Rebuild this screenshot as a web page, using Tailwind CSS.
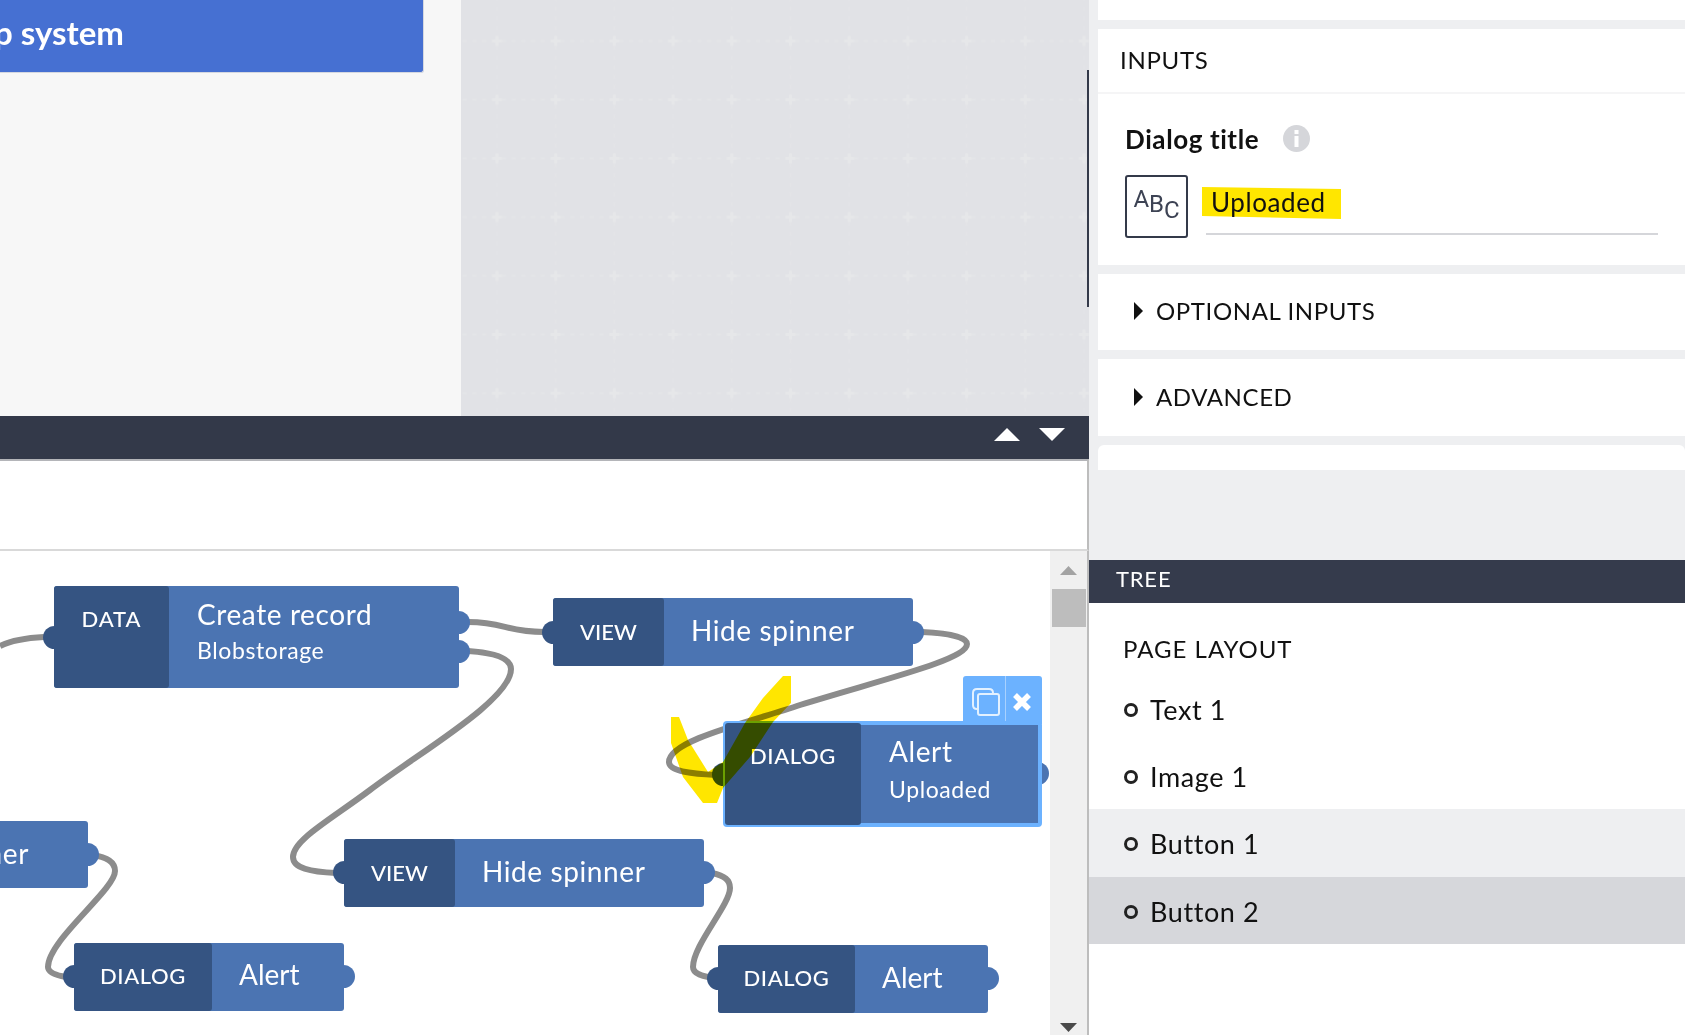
<!DOCTYPE html>
<html lang="en">
<head>
  <meta charset="UTF-8" />
  <meta name="viewport" content="width=device-width, initial-scale=1.0" />
  <title>Flow editor</title>
  <script src="https://cdn.jsdelivr.net/npm/@tailwindcss/browser@4"></script>
</head>
<body class="w-[1685px] h-[1035px] overflow-hidden flex bg-white text-[#111] tracking-[0.6px] font-['Lato','Open_Sans',sans-serif]">

  <!-- left column: preview + flow editor -->
  <div class="w-[1089px] h-full flex flex-col shrink-0">
    <div class="h-[416px] flex">
      <div class="w-[461px] bg-[#f7f7f7]">
        <div class="w-[424px] h-[73px] bg-[#4670d2] rounded-br-[3px] border-b border-r border-[#d5d8e0] overflow-hidden flex items-center justify-end pr-[299px] pb-[6px]">
          <span class="text-white font-bold text-[33px] tracking-normal whitespace-nowrap">Popup system</span>
        </div>
      </div>
      <div class="relative flex-1 bg-[#e1e2e6]">
        <svg class="absolute inset-0 w-full h-full" xmlns="http://www.w3.org/2000/svg">
          <defs>
            <pattern id="grid" x="6.650" y="11.650" width="58.7" height="58.7" patternUnits="userSpaceOnUse">
              <path d="M0 29.350H58.7" stroke="#e4e5e8" stroke-width="2" stroke-dasharray="4 5.780" stroke-dashoffset="-4.800" />
              <path d="M29.350 0V58.7" stroke="#e3e4e7" stroke-width="1.500" stroke-dasharray="4 5.780" stroke-dashoffset="-4.800" />
              <path d="M24.350 29.350H34.350M29.350 24.350V34.350" stroke="#e6e7e9" stroke-width="3" />
            </pattern>
          </defs>
          <rect width="100%" height="100%" fill="url(#grid)" />
        </svg>
        <div class="absolute right-0 top-[70px] w-[2px] h-[237px] bg-[#343a4a]"></div>
      </div>
    </div>

    <div class="h-[43px] bg-[#333949] flex items-center justify-end gap-[19px] pr-[24px] pb-[6px]">
      <svg width="26" height="13" viewBox="0 0 26 13"><path d="M0 13L13 0L26 13Z" fill="#fff" /></svg>
      <svg width="26" height="13" viewBox="0 0 26 13"><path d="M0 0H26L13 13Z" fill="#fff" /></svg>
    </div>
    <div class="h-[92px] bg-white border-t-[2px] border-b-[2px] border-t-[#b4b5b9] border-b-[#d9d9d9] border-r-[2px] border-r-[#bdbdbd]"></div>

    <div class="relative flex-1 flex border-r-[2px] border-[#bdbdbd]">
      <div class="relative flex-1 overflow-hidden">
        <svg class="absolute inset-0" width="1050" height="484" viewBox="0 551 1050 484" fill="none" stroke="#8c8c8c" stroke-width="6">
          <path d="M0 646C12 640 25 638 44 637" />
          <path d="M468 622C505 622 505 632 544 632" />
          <path d="M468 651C498 653 511 659 511 669C511 700 420 752 370 790C330 820 293 840 293 857C293 868 310 872 336 873" />
          <path d="M92 855C108 857 115 863 115 871C115 890 48 940 48 967C48 972 54 975 66 977" />
          <path d="M712 873C725 876 730 880 730 888C730 905 693 945 693 967C693 973 700 977 722 979" />
          <path d="M922 632C948 633 967 637 967 644C967 660 880 680 800 705C750 722 669 740 669 762C669 772 695 774 716 775" />
        </svg>

        <!-- partly hidden node on the left edge -->
        <div class="absolute left-[-200px] top-[270px] w-[288px] h-[67px]">
          <div class="absolute right-[-11px] top-[22px] w-[23px] h-[23px] rounded-full bg-[#4b74b2]"></div>
          <div class="relative h-full bg-[#4b74b2] rounded-[3px] flex items-center justify-end pr-[59px] pb-[4px] text-white text-[28px]">Hide spinner</div>
        </div>

        <!-- Create record -->
        <div class="absolute left-[54px] top-[35px] w-[405px] h-[102px]">
          <div class="absolute left-[-11px] top-[40px] w-[23px] h-[23px] rounded-full bg-[#355482]"></div>
          <div class="absolute right-[-11px] top-[25px] w-[23px] h-[23px] rounded-full bg-[#4b74b2]"></div>
          <div class="absolute right-[-11px] top-[54px] w-[23px] h-[23px] rounded-full bg-[#4b74b2]"></div>
          <div class="relative h-full flex rounded-[3px] overflow-hidden bg-[#4b74b2] text-white">
            <div class="w-[115px] bg-[#355482] rounded-r-[3px] text-center pt-[15px] text-[22px] tracking-[1px] font-medium leading-[36px]">DATA</div>
            <div class="pl-[28px] pt-[8px]">
              <div class="text-[28px] leading-[40px]">Create record</div>
              <div class="text-[23px] leading-[32px]">Blobstorage</div>
            </div>
          </div>
        </div>

        <!-- Hide spinner, top -->
        <div class="absolute left-[553px] top-[47px] w-[360px] h-[68px]">
          <div class="absolute left-[-11px] top-[23px] w-[23px] h-[23px] rounded-full bg-[#355482]"></div>
          <div class="absolute right-[-11px] top-[23px] w-[23px] h-[23px] rounded-full bg-[#4b74b2]"></div>
          <div class="relative h-full flex items-center rounded-[3px] overflow-hidden bg-[#4b74b2] text-white">
            <div class="w-[111px] h-full flex items-center justify-center bg-[#355482] rounded-r-[3px] pb-[2px] text-[22px] tracking-normal font-medium">VIEW</div>
            <div class="pl-[27px] pb-[5px] text-[28px]">Hide spinner</div>
          </div>
        </div>

        <!-- selected dialog -->
        <div class="absolute left-[963px] top-[125px] w-[79px] h-[48px] bg-[#6cb2ff] rounded-t-[3px] flex">
          <div class="w-[43px] border-r border-[#a8d1ff] flex items-center justify-center pl-[3px] pt-[3px]">
            <svg width="30" height="30" viewBox="0 0 30 30" fill="none" stroke="#e3f1ff" stroke-width="2">
              <path d="M6 22C3.500 22 2 20.500 2 18V6C2 3.500 3.500 2 6 2H18C20.500 2 22 3.500 22 6" />
              <rect x="7" y="7" width="21" height="21" rx="2" />
            </svg>
          </div>
          <div class="flex-1 flex items-center justify-center pr-[4px] pt-[3px]">
            <svg width="20" height="20" viewBox="0 0 20 20"><path d="M3 3L17 17M17 3L3 17" stroke="#fff" stroke-width="5.500" /></svg>
          </div>
        </div>
        <div class="absolute left-[723px] top-[170px] w-[319px] h-[106px]">
          <div class="absolute left-[-11px] top-[42px] w-[23px] h-[23px] rounded-full bg-[#355482]"></div>
          <div class="absolute right-[-7px] top-[41px] w-[23px] h-[23px] rounded-full bg-[#4b74b2]"></div>
          <div class="relative h-full flex rounded-[4px] border-[4px] border-[#6cb2ff] bg-[#4b74b2] text-white">
            <div class="w-[136px] -my-[2px] -ml-[2px] bg-[#355482] rounded-[3px] text-center pt-[15px] text-[22px] font-medium leading-[36px]">DIALOG</div>
            <div class="pl-[28px] pt-[6px]">
              <div class="text-[28px] leading-[40px]">Alert</div>
              <div class="text-[23px] leading-[36px]">Uploaded</div>
            </div>
          </div>
        </div>

        <!-- Hide spinner, lower -->
        <div class="absolute left-[344px] top-[288px] w-[360px] h-[68px]">
          <div class="absolute left-[-11px] top-[22px] w-[23px] h-[23px] rounded-full bg-[#355482]"></div>
          <div class="absolute right-[-11px] top-[22px] w-[23px] h-[23px] rounded-full bg-[#4b74b2]"></div>
          <div class="relative h-full flex items-center rounded-[3px] overflow-hidden bg-[#4b74b2] text-white">
            <div class="w-[111px] h-full flex items-center justify-center bg-[#355482] rounded-r-[3px] pb-[2px] text-[22px] tracking-normal font-medium">VIEW</div>
            <div class="pl-[27px] pb-[5px] text-[28px]">Hide spinner</div>
          </div>
        </div>

        <!-- Alert, left -->
        <div class="absolute left-[74px] top-[392px] w-[270px] h-[68px]">
          <div class="absolute left-[-11px] top-[22px] w-[23px] h-[23px] rounded-full bg-[#355482]"></div>
          <div class="absolute right-[-11px] top-[22px] w-[23px] h-[23px] rounded-full bg-[#4b74b2]"></div>
          <div class="relative h-full flex items-center rounded-[3px] overflow-hidden bg-[#4b74b2] text-white">
            <div class="w-[138px] h-full flex items-center justify-center bg-[#355482] rounded-r-[3px] pb-[4px] text-[22px] font-medium">DIALOG</div>
            <div class="pl-[27px] pb-[6px] text-[28px] tracking-normal">Alert</div>
          </div>
        </div>

        <!-- Alert, right -->
        <div class="absolute left-[718px] top-[394px] w-[270px] h-[68px]">
          <div class="absolute left-[-11px] top-[22px] w-[23px] h-[23px] rounded-full bg-[#355482]"></div>
          <div class="absolute right-[-11px] top-[22px] w-[23px] h-[23px] rounded-full bg-[#4b74b2]"></div>
          <div class="relative h-full flex items-center rounded-[3px] overflow-hidden bg-[#4b74b2] text-white">
            <div class="w-[137px] h-full flex items-center justify-center bg-[#355482] rounded-r-[3px] pb-[4px] text-[22px] font-medium">DIALOG</div>
            <div class="pl-[27px] pb-[5px] text-[28px] tracking-normal">Alert</div>
          </div>
        </div>

        <!-- yellow marker stroke -->
        <svg class="absolute inset-0 mix-blend-multiply" width="1050" height="484" viewBox="0 551 1050 484">
          <path fill="#ffe600" d="M671 717L679 717L688 740L708 772L723 762L745 723L763 698L783 676L791 676L791 703L773 722L750 757L723 788L717 803L703 803L683 777L671 743Z" />
        </svg>
      </div>

      <!-- scrollbar -->
      <div class="w-[37px] bg-[#f0f0f0] flex flex-col items-center">
        <svg class="mt-[15px]" width="17" height="9" viewBox="0 0 17 9"><path d="M0 9L8.500 0L17 9Z" fill="#a3a3a3" /></svg>
        <div class="w-[34px] h-[38px] mt-[14px] bg-[#bdbdbd]"></div>
        <div class="flex-1"></div>
        <svg class="mb-[3px]" width="17" height="9" viewBox="0 0 17 9"><path d="M0 0H17L8.500 9Z" fill="#4a4a4a" /></svg>
      </div>
    </div>
  </div>

  <!-- right column: properties + tree -->
  <div class="flex-1 h-full flex flex-col bg-[#eeeff1]">
    <div class="pl-[9px] h-[560px] flex flex-col">
      <div class="h-[20px] bg-white"></div>
      <div class="mt-[9px] h-[236px] bg-white">
        <div class="h-[65px] border-b-2 border-[#f5f5f6] pl-[22px] pb-[2px] flex items-center text-[24px] tracking-[0.7px]">INPUTS</div>
        <div class="pl-[27px] pt-[25px]">
          <div class="flex items-center gap-[24px] h-[40px]">
            <span class="text-[26px] font-bold">Dialog title</span>
            <svg class="-mt-[2px]" width="27" height="27" viewBox="0 0 27 27">
              <circle cx="13.500" cy="13.500" r="13.500" fill="#d5d6da" />
              <rect x="11.500" y="5" width="4" height="4" fill="#fff" />
              <rect x="11.500" y="11" width="4" height="11" fill="#fff" />
            </svg>
          </div>
          <div class="flex mt-[16px]">
            <div class="w-[63px] h-[63px] border-2 border-[#343a4a] rounded-[3px] flex justify-center pt-[7px] text-[#3d4354] text-[24px] tracking-normal font-['Roboto',sans-serif] leading-[30px]">
              <span>A</span><span class="translate-y-[5px]">B</span><span class="translate-y-[11px]">C</span>
            </div>
            <div class="ml-[18px] w-[452px] h-[60px] border-b-2 border-[#d5d6da] relative">
              <svg class="absolute left-[-4px] top-[12px] mix-blend-multiply" width="139" height="32" viewBox="0 0 139 32"><path d="M0 0L139 2V32L0 29Z" fill="#ffe600" /></svg>
              <span class="absolute left-[5px] top-[9px] text-[26px] leading-[36px]">Uploaded</span>
            </div>
          </div>
        </div>
      </div>
      <div class="mt-[9px] h-[76px] bg-white flex items-center pl-[36px] pb-[2px] text-[24px]">
        <svg width="9" height="18" viewBox="0 0 9 18"><path d="M0 0L9 9L0 18Z" fill="#111" /></svg>
        <span class="ml-[13px]">OPTIONAL INPUTS</span>
      </div>
      <div class="mt-[9px] h-[77px] bg-white flex items-center pl-[36px] pb-[2px] text-[24px]">
        <svg width="9" height="18" viewBox="0 0 9 18"><path d="M0 0L9 9L0 18Z" fill="#111" /></svg>
        <span class="ml-[13px]">ADVANCED</span>
      </div>
      <div class="mt-[9px] h-[25px] bg-white rounded-t-[6px]"></div>
    </div>

    <div class="h-[43px] bg-[#353b4c] flex items-center pl-[27px] pb-[6px] text-white text-[22px] tracking-[0.8px]">TREE</div>
    <div class="flex-1 bg-white">
      <div class="h-[72px] pl-[34px] pt-[20px] flex items-center text-[24px] tracking-[1px]">PAGE LAYOUT</div>
      <div class="h-[67px] pl-[35px] pt-[3px] flex items-center gap-[12px] text-[27px]"><span class="-mt-[1px] w-[14px] h-[14px] rounded-full border-[3px] border-[#222]"></span>Text 1</div>
      <div class="h-[67px] pl-[35px] pt-[3px] flex items-center gap-[12px] text-[27px]"><span class="-mt-[1px] w-[14px] h-[14px] rounded-full border-[3px] border-[#222]"></span>Image 1</div>
      <div class="h-[68px] pl-[35px] pt-[3px] flex items-center gap-[12px] text-[27px] bg-[#eeeff1]"><span class="-mt-[1px] w-[14px] h-[14px] rounded-full border-[3px] border-[#222]"></span>Button 1</div>
      <div class="h-[67px] pl-[35px] pt-[3px] flex items-center gap-[12px] text-[27px] bg-[#d6d7db]"><span class="-mt-[1px] w-[14px] h-[14px] rounded-full border-[3px] border-[#222]"></span>Button 2</div>
    </div>
  </div>
</body>
</html>
